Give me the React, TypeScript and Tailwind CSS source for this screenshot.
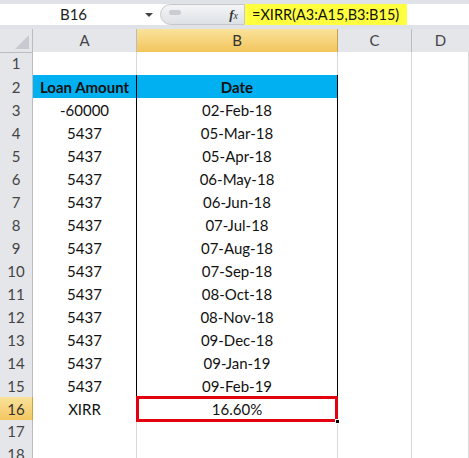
import React from 'react';

const font = { fontFamily: 'Lato, "Liberation Sans", sans-serif' };

const rows: [string, string][] = [
  ['-60000', '02-Feb-18'],
  ['5437', '05-Mar-18'],
  ['5437', '05-Apr-18'],
  ['5437', '06-May-18'],
  ['5437', '06-Jun-18'],
  ['5437', '07-Jul-18'],
  ['5437', '07-Aug-18'],
  ['5437', '07-Sep-18'],
  ['5437', '08-Oct-18'],
  ['5437', '08-Nov-18'],
  ['5437', '09-Dec-18'],
  ['5437', '09-Jan-19'],
  ['5437', '09-Feb-19'],
];

const gridCols = 'grid grid-cols-[33px_104px_201px_74px_1fr]';

function RowHead({ n, active }: { n: number; active?: boolean }) {
  return (
    <div
      className={`flex items-center justify-center border-r border-b text-[15px] ${
        active
          ? 'bg-gradient-to-b from-[#f9e29a] to-[#f3c55c] border-[#c9a24f] text-[#333]'
          : 'bg-[#e4e6ea] border-[#b9bcc1] text-[#444]'
      }`}
    >
      {n}
    </div>
  );
}

function Cell({ children, table, bold, blue, topBlack }: { children?: React.ReactNode; table?: boolean; bold?: boolean; blue?: boolean; topBlack?: boolean }) {
  return (
    <div
      className={`flex items-center justify-center pt-[1px] border-r border-b text-[15px] text-[#111] ${
        table ? 'border-black' : topBlack ? 'border-r-[#d9d9d9] border-b-black' : 'border-[#d9d9d9]'
      } ${bold ? 'font-bold' : ''} ${blue ? 'bg-[#00b0f0]' : 'bg-white'}`}
    >
      {children}
    </div>
  );
}

export default function App() {
  return (
    <div className="w-[469px] h-[458px] overflow-hidden bg-white" style={font}>
      {/* Formula bar */}
      <div className="h-[29px] bg-[#dfe3e8] pt-[4px] pb-[4px]">
        <div className="h-[21px] bg-white flex items-center">
          <div className="w-[160px] flex items-center h-full">
            <div className="flex-1 text-center text-[15px] text-[#222] pl-[2px]">B16</div>
            <div className="w-0 h-0 border-l-[4px] border-r-[4px] border-t-[4px] border-l-transparent border-r-transparent border-t-[#444] mr-[7px]" />
          </div>
          <div className="w-[85px] h-full flex items-center rounded-l-full bg-gradient-to-b from-[#f4f5f7] to-[#dde1e6] border border-[#c4c8ce] relative">
            <div className="absolute left-[8px] top-[5px] w-[12px] h-[5px] rounded-full bg-[#c9cdd3]" />
            <span className="ml-auto mr-[6px] text-[13px] italic text-[#333]" style={{ fontFamily: '"Liberation Serif", serif' }}>
              <b>f</b><span className="text-[10px]">x</span>
            </span>
          </div>
          <div className="h-full bg-[#ffff40] flex items-center pl-[7px] pr-[8px] text-[14.5px] text-[#111]">
            =XIRR(A3:A15,B3:B15)
          </div>
        </div>
      </div>

      {/* Column header */}
      <div className={`${gridCols} h-[23px]`}>
        <div className="bg-[#e4e6ea] border-r border-b border-[#b9bcc1] relative overflow-hidden">
          <div className="absolute right-[3px] bottom-[3px] w-0 h-0" style={{ borderBottom: '14px solid #c7cbd1', borderLeft: '14px solid transparent' }} />
        </div>
        <div className="flex items-center justify-center bg-[#e4e6ea] border-r border-b border-[#b9bcc1] text-[15px] text-[#444]">A</div>
        <div className="flex items-center justify-center bg-gradient-to-b from-[#f9e29a] to-[#f3c55c] border-r border-b border-[#c9a24f] text-[15px] text-[#333]">B</div>
        <div className="flex items-center justify-center bg-[#e4e6ea] border-r border-b border-[#b9bcc1] text-[15px] text-[#444]">C</div>
        <div className="flex items-center justify-center bg-[#e4e6ea] border-b border-[#b9bcc1] text-[15px] text-[#444]">D</div>
      </div>

      {/* Row 1 */}
      <div className={`${gridCols} h-[23px]`}>
        <RowHead n={1} />
        <Cell topBlack />
        <Cell topBlack />
        <Cell />
        <Cell />
      </div>

      {/* Row 2 header */}
      <div className={`${gridCols} h-[23px]`}>
        <RowHead n={2} />
        <Cell table bold blue>Loan Amount</Cell>
        <Cell table bold blue>Date</Cell>
        <Cell />
        <Cell />
      </div>

      {rows.map(([amt, date], i) => (
        <div key={i} className={`${gridCols} h-[23px]`}>
          <RowHead n={i + 3} />
          <Cell table>{amt}</Cell>
          <Cell table>{date}</Cell>
          <Cell />
          <Cell />
        </div>
      ))}

      {/* Row 16 */}
      <div className={`${gridCols} h-[23px]`}>
        <RowHead n={16} active />
        <Cell table>XIRR</Cell>
        <div className="relative flex items-center justify-center pt-[1px] bg-white border-r border-b border-black text-[15px] text-[#111]">
          16.60%
          <div className="absolute -left-[1px] -top-[1px] -right-[1px] -bottom-[1px] border-[3px] border-[#e3000f]" />
          <div className="absolute -right-[3px] -bottom-[3px] w-[5px] h-[5px] bg-black border border-white" />
        </div>
        <Cell />
        <Cell />
      </div>

      {[17, 18].map((n) => (
        <div key={n} className={`${gridCols} h-[23px]`}>
          <RowHead n={n} />
          <Cell />
          <Cell />
          <Cell />
          <Cell />
        </div>
      ))}
    </div>
  );
}
